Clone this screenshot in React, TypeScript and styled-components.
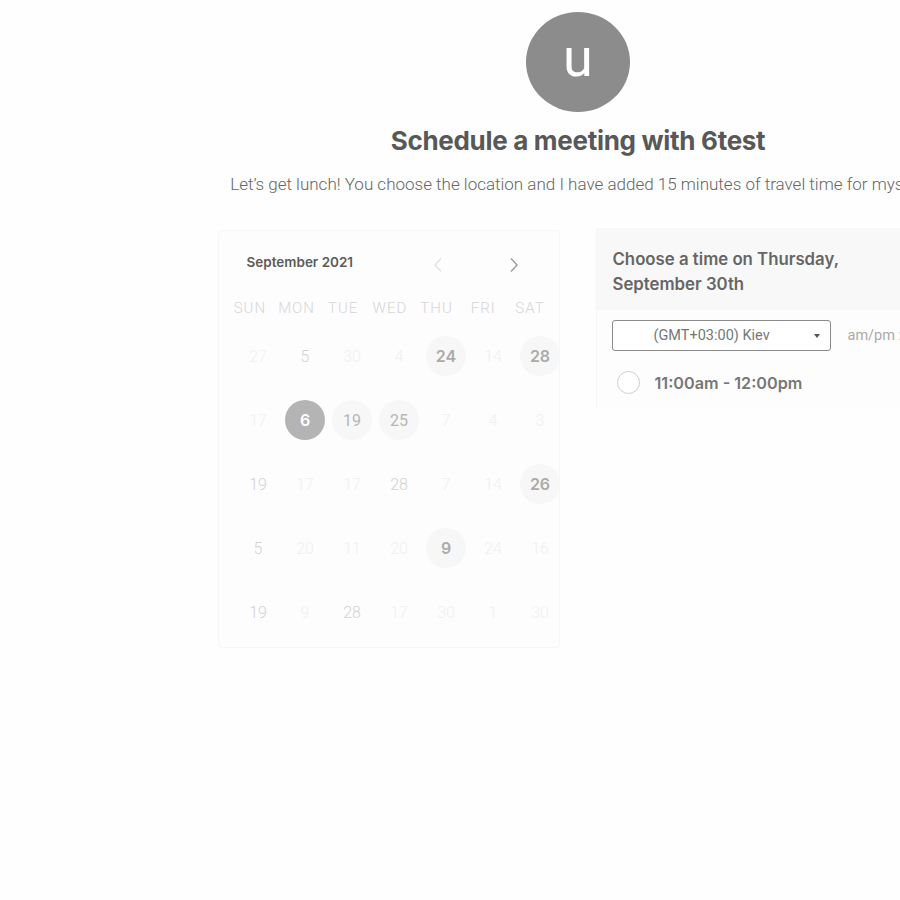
import React from "react";
import styled, { createGlobalStyle } from "styled-components";

const Global = createGlobalStyle`
  html, body { margin: 0; padding: 0; background: #fefefe; overflow: hidden; }
  body { font-family: "Roboto", "Liberation Sans", sans-serif; }
`;

const Page = styled.div`
  width: 1156px;
  display: flex;
  flex-direction: column;
  align-items: center;
  padding-top: 12px;
`;

const Avatar = styled.div`
  width: 104px;
  height: 100px;
  border-radius: 50%;
  background: #8c8c8c;
  color: #fff;
  display: flex;
  align-items: center;
  justify-content: center;
  font-family: "Roboto", sans-serif;
  font-size: 54px;
  line-height: 1;
  padding-bottom: 8px;
  box-sizing: border-box;
`;

const Title = styled.h1`
  margin: 13px 0 0;
  font-family: "Inter", "Liberation Sans", sans-serif;
  font-weight: 700;
  font-size: 26px;
  line-height: 32px;
  color: #585858;
  letter-spacing: -0.3px;
`;

const Subtitle = styled.p`
  margin: 16px 0 0;
  font-family: "Roboto", sans-serif;
  font-weight: 300;
  font-size: 17px;
  line-height: 22px;
  color: #666;
  white-space: nowrap;
`;

const Row = styled.div`
  display: flex;
  gap: 36px;
  margin-top: 35px;
  align-items: flex-start;
`;

const CalendarCard = styled.div`
  width: 342px;
  height: 418px;
  box-sizing: border-box;
  background: #fdfdfd;
  border: 1px solid #f6f6f6;
  border-radius: 4px;
  padding: 21px 0 0 0;
`;

const CalHeader = styled.div`
  display: flex;
  align-items: center;
  padding-left: 28px;
  height: 20px;
`;

const MonthLabel = styled.div`
  flex-shrink: 0;
  font-family: "Inter", sans-serif;
  font-weight: 600;
  font-size: 13.5px;
  color: #5c5c5c;
  width: 184px;
`;

const NavBtn = styled.span<{ $dim?: boolean }>`
  flex-shrink: 0;
  display: inline-flex;
  width: 14px;
  height: 20px;
  align-items: center;
  justify-content: center;
  margin-top: 6px;
  color: ${(p) => (p.$dim ? "#e2e2e2" : "#9a9a9a")};
  margin-right: ${(p) => (p.$dim ? "62px" : "0")};
`;

const WeekRow = styled.div`
  display: grid;
  grid-template-columns: repeat(7, 46.7px);
  padding-left: 8px;
  margin-top: 28px;
`;

const WeekDay = styled.div`
  text-align: center;
  font-family: "Roboto", sans-serif;
  font-weight: 300;
  font-size: 15px;
  line-height: 17px;
  letter-spacing: 1px;
  color: #d6d6d6;
`;

const DaysGrid = styled.div`
  display: grid;
  grid-template-columns: repeat(7, 47px);
  grid-auto-rows: 64px;
  padding-left: 16px;
  margin-top: 7px;
`;

const Cell = styled.div`
  display: flex;
  align-items: center;
  justify-content: center;
`;

type Kind = "faint" | "light" | "avail" | "strong" | "sel";

const Day = styled.div<{ $kind: Kind }>`
  width: 40px;
  height: 40px;
  border-radius: 50%;
  display: flex;
  align-items: center;
  justify-content: center;
  font-family: ${(p) =>
    p.$kind === "strong" || p.$kind === "sel" ? `"Inter", sans-serif` : `"Roboto", sans-serif`};
  font-size: 16px;
  font-weight: ${(p) =>
    p.$kind === "strong" || p.$kind === "sel" ? 600 : p.$kind === "avail" ? 400 : 300};
  background: ${(p) =>
    p.$kind === "sel" ? "#b4b4b4" : p.$kind === "strong" || p.$kind === "avail" ? "#f7f7f7" : "transparent"};
  color: ${(p) =>
    p.$kind === "sel"
      ? "#fff"
      : p.$kind === "strong"
      ? "#ababab"
      : p.$kind === "avail"
      ? "#b6b6b6"
      : p.$kind === "light"
      ? "#d2d2d2"
      : "#f0f0f0"};
`;

const TimePanel = styled.div`
  width: 342px;
  background: #fdfdfd;
  border-left: 1px solid #f6f6f6;
  min-height: 180px;
  margin-top: -2px;
`;

const TimeHeader = styled.div`
  background: #f8f8f8;
  padding: 19px 16px 13px;
  height: 82px;
  box-sizing: border-box;
  font-family: "Inter", sans-serif;
  font-weight: 600;
  font-size: 16.8px;
  line-height: 25px;
  color: #666;
`;

const Controls = styled.div`
  display: flex;
  align-items: center;
  padding: 10px 0 0 15px;
  gap: 17px;
`;

const Select = styled.div`
  width: 219px;
  height: 31px;
  box-sizing: border-box;
  border: 1px solid #8a8a8a;
  border-radius: 3px;
  background: #fff;
  display: flex;
  align-items: center;
  padding: 0 10px 0 41px;
  font-family: "Roboto", sans-serif;
  font-size: 14.5px;
  color: #777;
`;

const SelectText = styled.span`
  flex: 1;
`;

const Caret = styled.span`
  width: 0;
  height: 0;
  border-left: 3.5px solid transparent;
  border-right: 3.5px solid transparent;
  border-top: 4px solid #555;
`;

const AmPm = styled.span`
  font-family: "Roboto", sans-serif;
  font-size: 14.5px;
  color: #aaa;
  white-space: nowrap;
`;

const Slot = styled.div`
  display: flex;
  align-items: center;
  padding: 20px 0 0 20px;
  gap: 15px;
`;

const Radio = styled.span`
  width: 23px;
  height: 23px;
  box-sizing: border-box;
  border-radius: 50%;
  border: 1px solid #cfcfcf;
  background: #fff;
`;

const SlotLabel = styled.span`
  font-family: "Inter", sans-serif;
  font-weight: 600;
  font-size: 16.2px;
  color: #777;
`;

const weekdays = ["SUN", "MON", "TUE", "WED", "THU", "FRI", "SAT"];

const days: [string, Kind][] = [
  ["27", "faint"], ["5", "light"], ["30", "faint"], ["4", "faint"], ["24", "strong"], ["14", "faint"], ["28", "strong"],
  ["17", "faint"], ["6", "sel"], ["19", "avail"], ["25", "avail"], ["7", "faint"], ["4", "faint"], ["3", "faint"],
  ["19", "light"], ["17", "faint"], ["17", "faint"], ["28", "light"], ["7", "faint"], ["14", "faint"], ["26", "strong"],
  ["5", "light"], ["20", "faint"], ["11", "faint"], ["20", "faint"], ["9", "strong"], ["24", "faint"], ["16", "faint"],
  ["19", "light"], ["9", "faint"], ["28", "light"], ["17", "faint"], ["30", "faint"], ["1", "faint"], ["30", "faint"],
];

const Chevron = ({ dir }: { dir: "l" | "r" }) => (
  <svg width="10" height="16" viewBox="0 0 10 16" fill="none" stroke="currentColor" strokeWidth="1.4">
    {dir === "l" ? <path d="M8 1.5 2 8l6 6.5" /> : <path d="M2 1.5 8 8l-6 6.5" />}
  </svg>
);

export default function App() {
  return (
    <>
      <Global />
      <Page>
        <Avatar>u</Avatar>
        <Title>Schedule a meeting with 6test</Title>
        <Subtitle>
          Let’s get lunch! You choose the location and I have added 15 minutes of travel time for myself.
        </Subtitle>
        <Row>
          <CalendarCard>
            <CalHeader>
              <MonthLabel>September 2021</MonthLabel>
              <NavBtn $dim>
                <Chevron dir="l" />
              </NavBtn>
              <NavBtn>
                <Chevron dir="r" />
              </NavBtn>
            </CalHeader>
            <WeekRow>
              {weekdays.map((w) => (
                <WeekDay key={w}>{w}</WeekDay>
              ))}
            </WeekRow>
            <DaysGrid>
              {days.map(([n, k], i) => (
                <Cell key={i}>
                  <Day $kind={k}>{n}</Day>
                </Cell>
              ))}
            </DaysGrid>
          </CalendarCard>
          <TimePanel>
            <TimeHeader>
              Choose a time on Thursday,
              <br />
              September 30th
            </TimeHeader>
            <Controls>
              <Select>
                <SelectText>(GMT+03:00) Kiev</SelectText>
                <Caret />
              </Select>
              <AmPm>am/pm :</AmPm>
            </Controls>
            <Slot>
              <Radio />
              <SlotLabel>11:00am - 12:00pm</SlotLabel>
            </Slot>
          </TimePanel>
        </Row>
      </Page>
    </>
  );
}
